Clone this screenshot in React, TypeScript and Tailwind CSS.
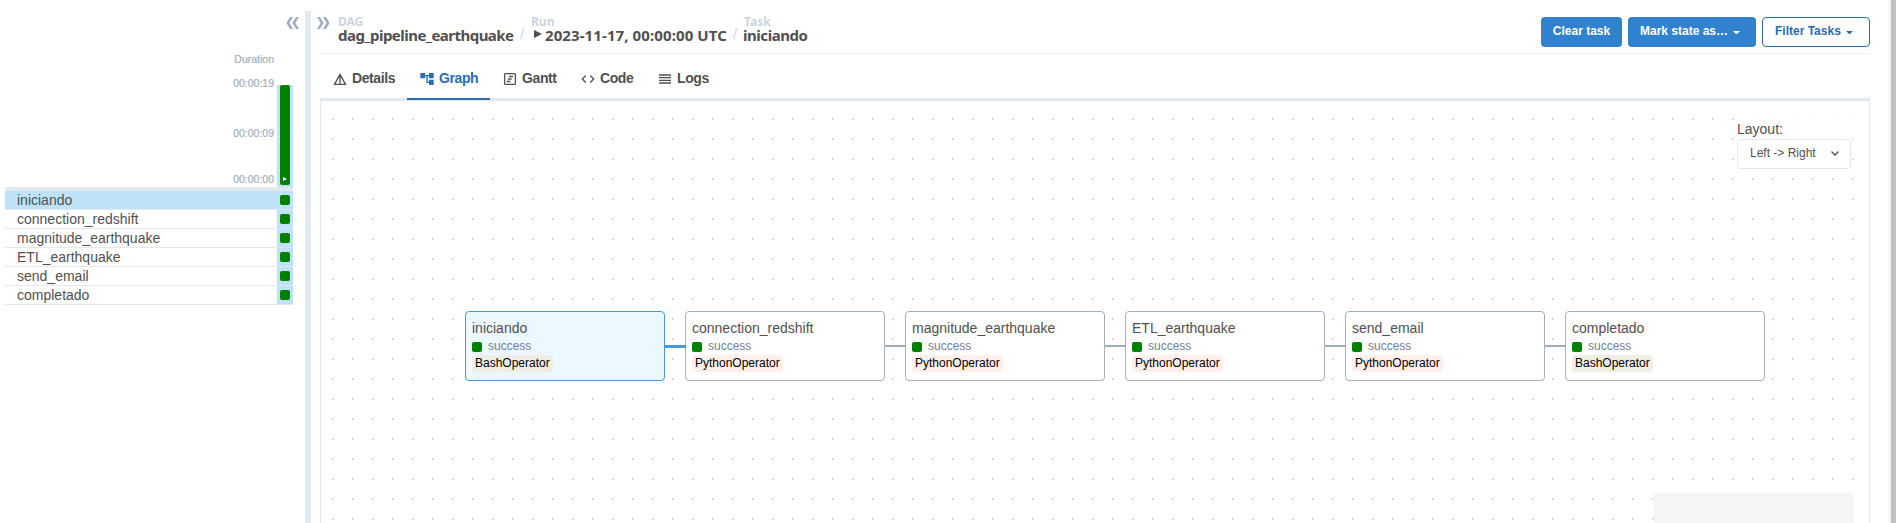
import type { ReactNode } from "react";
import { MdAccountTree, MdCode, MdDetails, MdReorder } from "react-icons/md";

const tasks = ["iniciando", "connection_redshift", "magnitude_earthquake", "ETL_earthquake", "send_email", "completado"];

function DoubleChevron({ className }: { className: string }) {
  return (
    <svg className={"h-3 w-[13px] shrink-0 text-[#a0aec0] " + className} viewBox="0 0 13 12" fill="currentColor">
      <path d="M0 0H3L6.6 6L3 12H0L3.6 6Z" />
      <path d="M6 0H9L12.6 6L9 12H6L9.6 6Z" />
    </svg>
  );
}

function GridPanel() {
  return (
    <aside className="w-[305px] shrink-0 pl-[5px] pt-[11px]">
      <div className="flex h-[42px] justify-end pr-[6px] pt-[6px]">
        <DoubleChevron className="rotate-180" />
      </div>
      <div className="flex h-[134px] w-[288px]">
        <div className="flex w-[272px] flex-col items-end pr-[3px] text-[10.5px] leading-[12px] text-[#a0aec0] [-webkit-text-stroke:0.2px_#a0aec0]">
          <span className="mb-3">Duration</span>
          <span className="mb-[38px]">00:00:19</span>
          <span className="mb-[34px]">00:00:09</span>
          <span>00:00:00</span>
        </div>
        <div className="relative mt-[32px] flex h-[102px] w-4 justify-center bg-[#bee3f8]">
          <i className="absolute inset-x-0 top-0 h-px bg-[#cfe6f5]" />
          <i className="absolute inset-x-0 top-[51px] h-px bg-[#cfe6f5]" />
          <i className="absolute inset-x-0 top-[97px] h-px bg-[#cfe6f5]" />
          <div className="relative flex h-[100px] w-[10px] items-end justify-center rounded-[2px] bg-[#008000] pb-1">
            <svg className="h-1 w-1" viewBox="0 0 4 4"><path d="M0 0L4 2L0 4Z" fill="white" /></svg>
          </div>
        </div>
      </div>
      <div className="h-1 w-[288px] bg-[#e2e8f0]" />
      {tasks.map((t, i) => (
        <div key={t} className={"flex h-[19px] w-[288px] border-b border-[#e2e8f0] " + (i === 0 ? "bg-[#bee3f8]" : "")}>
          <span className="w-[272px] pl-3 text-[14px] leading-[18px] text-[#51504f]">{t}</span>
          <span className="flex w-4 items-center justify-center bg-[#bee3f8]"><i className="size-[10px] rounded-[2px] bg-[#008000]" /></span>
        </div>
      ))}
    </aside>
  );
}

function Crumb({ label, width, children }: { label: string; width: string; children: ReactNode }) {
  return (
    <div className={"whitespace-nowrap font-['Noto_Sans','Open_Sans',sans-serif] font-bold " + width}>
      <div className="text-[12px] leading-[14px] text-[#cbd5e0]">{label}</div>
      <div className="flex text-[15px] leading-[13px] text-[#51504f]">{children}</div>
    </div>
  );
}

function Slash() {
  return <span className="mt-[12px] w-[17px] pl-1.5 text-[15px] leading-[14px] text-[#cbd5e0]">/</span>;
}

function Header() {
  return (
    <div className="flex h-[43px] border-b border-[#edf2f7]">
      <div className="flex grow pl-[18px] pt-[4px]">
        <Crumb label="DAG" width="w-[176px]"><span className="tracking-[-0.53px]">dag_pipeline_earthquake</span></Crumb>
        <Slash />
        <Crumb label="Run" width="w-[196px]">
          <svg className="ml-[3px] mr-[3px] mt-px h-2 w-2" viewBox="0 0 8 8"><path d="M0 0L8 4L0 8Z" fill="currentColor" /></svg>
          <span className="tracking-[0.1px]">2023-11-17, 00:00:00 UTC</span>
        </Crumb>
        <Slash />
        <Crumb label="Task" width="w-[70px]"><span className="-ml-px tracking-[-0.45px]">iniciando</span></Crumb>
      </div>
      <div className="flex gap-1.5 pt-1.5 text-[12px] font-bold text-white">
        <div className="h-[30px] w-[81px] rounded bg-[#3182ce] text-center leading-[29px]">Clear task</div>
        <div className="flex h-[30px] w-32 items-center rounded bg-[#3182ce] pb-0.5 pl-3">Mark state as…<Caret /></div>
        <div className="flex h-[30px] w-[108px] items-center rounded border border-[#2b6cb0] pb-0.5 pl-3 text-[#2b6cb0]">Filter Tasks<Caret /></div>
      </div>
    </div>
  );
}

function Caret() {
  return <svg className="ml-[5px] mt-[3px] h-[3px] w-[7px]" viewBox="0 0 7 3"><path d="M0 0H7L3.5 3.5Z" fill="currentColor" /></svg>;
}

function Tab({ icon, label, width, active }: { icon: ReactNode; label: string; width: string; active?: boolean }) {
  return (
    <div className={"flex h-[46px] items-center border-b-2 pl-3 pt-[5px] text-[14px] font-bold " + width + (active ? " border-[#2b6cb0] text-[#2b6cb0]" : " border-transparent text-[#51504f]")}>
      <span className="mt-px">{icon}</span><span className="ml-1 tracking-[-0.4px]">{label}</span>
    </div>
  );
}

function Tabs() {
  return (
    <div className="h-[47px] border-b-[3px] border-[#e2e8f0]">
      <div className="flex">
        <Tab width="w-[87px]" label="Details" icon={<MdDetails className="size-4" />} />
        <Tab width="w-[83px]" label="Graph" active icon={<MdAccountTree className="size-4" />} />
        <Tab width="w-[78px]" label="Gantt" icon={<svg className="size-4" viewBox="0 0 16 16" fill="none" stroke="currentColor" strokeWidth="1.3"><rect x="2.6" y="2.6" width="10.8" height="10.8" rx="1" /><path d="M7 5.5H11M5.8 8H9.6M4.7 10.5H8.4" /></svg>} />
        <Tab width="w-[77px]" label="Code" icon={<MdCode className="size-4" />} />
        <Tab width="w-[80px]" label="Logs" icon={<MdReorder className="size-4" />} />
      </div>
    </div>
  );
}

function Node({ name, selected }: { name: string; selected: boolean }) {
  const bash = name === "iniciando" || name === "completado";
  return (
    <div className={"h-[70px] w-[200px] rounded border pl-1.5 pt-[7px] " + (selected ? "border-[#4299e1] bg-[#ebf8ff]" : "border-[#a0aec0] bg-white")}>
      <div className="text-[14px] leading-[18px] text-[#51504f]">{name}</div>
      <div className="flex h-[18px] items-center gap-1.5 text-[12px] text-[#718096]"><i className="mt-[2px] size-[10px] rounded-[2px] bg-[#008000]" />success</div>
      <span className={"block h-[17px] w-fit rounded px-[3px] text-[12px] leading-[16px] text-black " + (bash ? "bg-[#f0ede4]" : "bg-[#ffefeb]")}>{bash ? "BashOperator" : "PythonOperator"}</span>
    </div>
  );
}

function Graph() {
  return (
    <div className="relative h-[422px] overflow-hidden border-x border-[#e2e8f0]">
      <svg className="absolute left-[11px] top-[17px] h-[405px] w-[1524px]">
        <defs><pattern id="dots" width="20" height="20" patternUnits="userSpaceOnUse"><rect width="1" height="2" fill="#d2d2d2" /><rect x="1" width="1" height="2" fill="#e7e7e7" /></pattern></defs>
        <rect width="1524" height="405" fill="url(#dots)" />
      </svg>
      <div className="absolute left-[144px] top-[210px] flex">
        {tasks.map((t, i) => (
          <div key={t} className="flex items-center">
            {i > 0 && <div className={i === 1 ? "relative -mx-px h-[3px] w-[22px] bg-[#4299e1]" : "h-[2px] w-5 bg-[#a0aec0]"} />}
            <Node name={t} selected={i === 0} />
          </div>
        ))}
      </div>
      <div className="absolute left-[1416px] top-[17px] w-[120px] text-[#51504f]">
        <div className="h-[21px] bg-white/80 pt-[1px] text-[14px] leading-[20px]">Layout:</div>
        <div className="flex h-[30px] w-[114px] items-center justify-between rounded border border-[#e2e8f0] bg-white pb-[3px] pl-3 pr-[11px] text-[12px]">
          Left -&gt; Right
          <svg className="mt-[2px] h-[5px] w-2" viewBox="0 0 8 5" fill="none" stroke="currentColor" strokeWidth="1.4"><path d="M.5 .5L4 4L7.5 .5" /></svg>
        </div>
      </div>
      <div className="absolute left-[1333px] top-[392px] h-[30px] w-[200px] bg-[#f5f5f5]" />
    </div>
  );
}

export default function App() {
  return (
    <div className="flex h-[523px] w-[1896px] overflow-hidden bg-white font-['Liberation_Sans',Arial,sans-serif]">
      <GridPanel />
      <div className="mt-[11px] w-1.5 shrink-0 bg-[#e2e8f0]" />
      <DoubleChevron className="ml-[6px] mt-[17px]" />
      <main className="-ml-[10px] w-[1550px] shrink-0 pt-[11px]">
        <Header />
        <Tabs />
        <Graph />
      </main>
      <div className="ml-auto w-[7px] border-l-2 border-[#f1f1f1] bg-[#c1c1c1]" />
    </div>
  );
}
